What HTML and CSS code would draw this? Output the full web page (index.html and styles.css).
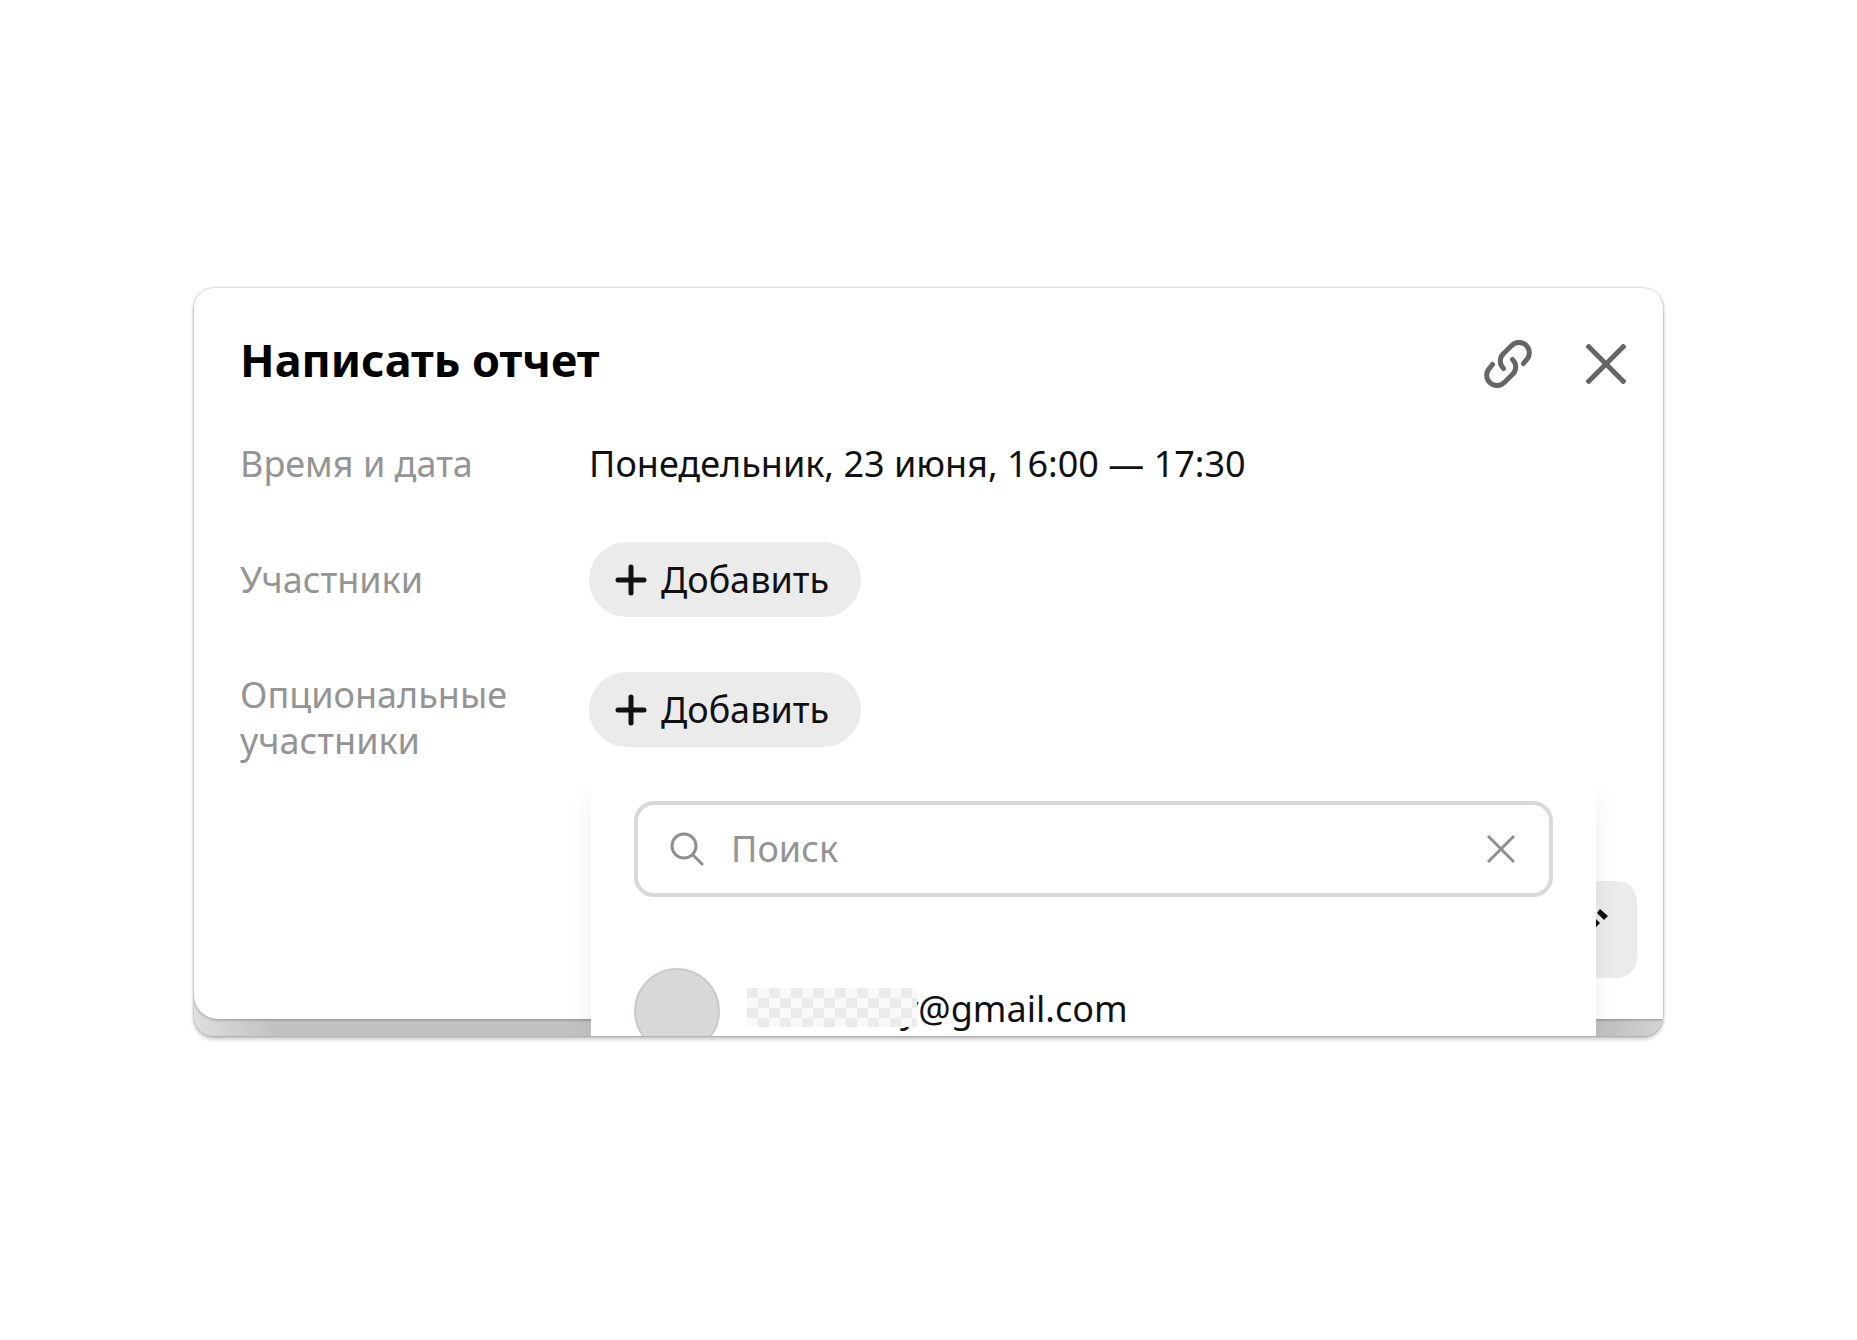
FILE: index.html
```html
<!DOCTYPE html>
<html lang="ru">
<head>
    <meta charset="UTF-8">
    <meta name="viewport" content="width=device-width, initial-scale=1.0">
    <title>Написать отчет</title>
    <link rel="stylesheet" href="styles.css">
</head>
<body>
    <main class="card">
        <div class="sheet">
            <header class="header">
                <h1 class="title">Написать отчет</h1>
                <button class="iconButton" type="button" aria-label="Скопировать ссылку">
                    <svg width="48" height="48" viewBox="0 0 48 48" fill="none" stroke="currentColor" stroke-width="5" stroke-linecap="round">
                        <path d="M39.5 23.5L42.3 20A10.3 10.3 0 0 0 27.7 5.4L19.7 13.4A10.3 10.3 0 0 0 19.5 28.5"/>
                        <path d="M8.5 24.5L5.7 28A10.3 10.3 0 0 0 20.3 42.6L28.3 34.6A10.3 10.3 0 0 0 28.5 19.5"/>
                    </svg>
                </button>
                <button class="iconButton" type="button" aria-label="Закрыть">
                    <svg width="40" height="40" viewBox="0 0 40 40" fill="none" stroke="currentColor" stroke-width="5">
                        <path d="M1 1L39 39M39 1L1 39"/>
                    </svg>
                </button>
            </header>
            <div class="fields">
                <div class="label">Время и дата</div>
                <div class="date">Понедельник, 23 июня, 16:00 — 17:30</div>
                <div class="label middle" id="members">Участники</div>
                <div>
                    <button class="addButton" type="button" aria-describedby="members">
                        <svg width="32" height="32" viewBox="0 0 32 32" stroke="currentColor" stroke-width="5" stroke-linecap="round">
                            <path d="M16 3V29M3 16H29"/>
                        </svg>
                        Добавить
                    </button>
                </div>
                <div class="label" id="optional">Опциональные участники</div>
                <div>
                    <button class="addButton" type="button" aria-describedby="optional">
                        <svg width="32" height="32" viewBox="0 0 32 32" stroke="currentColor" stroke-width="5" stroke-linecap="round">
                            <path d="M16 3V29M3 16H29"/>
                        </svg>
                        Добавить
                    </button>
                </div>
            </div>
            <footer class="footer">
                <button class="editButton" type="button" aria-label="Редактировать">
                    <svg width="42" height="42" viewBox="0 0 42 42" fill="currentColor">
                        <path d="M33 0L41 7L37 11L30 4ZM26 7L33 14L8 40L0 42L1 33Z"/>
                    </svg>
                </button>
            </footer>
        </div>

        <!-- Выпадающий список контактов -->
        <div class="popup">
            <div class="search">
                <svg width="34" height="34" viewBox="0 0 34 34" fill="none" stroke="currentColor" stroke-width="3" stroke-linecap="round">
                    <circle cx="14" cy="14" r="12"/>
                    <path d="M22.5 22.5L32 32"/>
                </svg>
                <input class="searchInput" type="text" placeholder="Поиск" aria-label="Поиск">
                <button class="clearButton" type="button" aria-label="Очистить">
                    <svg width="28" height="28" viewBox="0 0 28 28" fill="none" stroke="currentColor" stroke-width="3">
                        <path d="M1 1L27 27M27 1L1 27"/>
                    </svg>
                </button>
            </div>
            <div class="contact">
                <span class="avatar"></span>
                <span class="mosaic"></span>
                <span class="email">y@gmail.com</span>
            </div>
        </div>
    </main>
</body>
</html>
```
FILE: styles.css
```css
body {
    margin: 0;
    padding: 288px 194px;
    background-color: #fff;
    color: #111;
    font-family: "Noto Sans", sans-serif;
    font-size: 36px;
    line-height: 46px;
}
button {
    border: none;
    background: none;
    padding: 0;
    font: inherit;
    color: inherit;
    cursor: pointer;
}
svg {
    display: block;
    flex: none;
}
.card {
    position: relative;
    overflow: hidden;
    padding-bottom: 17px;
    border-radius: 20px;
    background: linear-gradient(to right, #dedede, #c2c2c2 80px, #c2c2c2 calc(100% - 50px), #d4d4d4);
    box-shadow: 0 0 2px rgba(0, 0, 0, 0.4), 0 3px 4px rgba(0, 0, 0, 0.25);
}
.sheet {
    padding: 44px 26px 41px 46px;
    border-radius: 0 0 0 24px;
    background: #fff;
    box-shadow: 0 1px 3px rgba(0, 0, 0, 0.3);
}
.header {
    display: flex;
    align-items: center;
    gap: 54px;
    height: 64px;
    margin-bottom: 45px;
    padding-right: 11px;
}
.title {
    flex: 1;
    align-self: flex-start;
    margin: 0;
    color: #000;
    font-size: 45px;
    line-height: 56px;
}
.iconButton {
    color: #666;
}
.fields {
    display: grid;
    grid-template-columns: 294px 1fr;
    gap: 55px;
}
.label {
    color: #949494;
}
.middle {
    align-self: center;
}
.addButton {
    display: flex;
    align-items: center;
    gap: 14px;
    height: 75px;
    padding: 0 32px 0 26px;
    border-radius: 38px;
    background: #ebebeb;
}
.footer {
    display: flex;
    justify-content: flex-end;
    margin-top: 117px;
}
.editButton {
    display: flex;
    align-items: center;
    justify-content: center;
    width: 98px;
    height: 97px;
    border-radius: 20px;
    background: #ebebeb;
}
.popup {
    position: absolute;
    top: 477px;
    left: 397px;
    right: 67px;
    padding: 36px 43px;
    background: #fff;
    box-shadow: 0 32px 24px rgba(0, 0, 0, 0.07);
}
.search {
    display: flex;
    align-items: center;
    gap: 27px;
    height: 88px;
    padding: 0 34px 0 32px;
    border: 4px solid #d9d9d9;
    border-radius: 20px;
    color: #8f8f8f;
}
.searchInput {
    flex: 1;
    min-width: 0;
    padding: 0;
    border: none;
    outline: none;
    background: none;
    font: inherit;
}
.searchInput::placeholder {
    color: #949494;
    opacity: 1;
}
.contact {
    display: flex;
    align-items: flex-start;
    margin-top: 71px;
}
.avatar {
    box-sizing: border-box;
    width: 86px;
    height: 86px;
    border: 2px solid #c8caca;
    border-radius: 50%;
    background: #d6d8d9;
}
.mosaic {
    z-index: 1;
    width: 170px;
    height: 39px;
    margin: 20px 0 0 27px;
    background: repeating-conic-gradient(#f9f9f9 0 25%, #ebebeb 0 50%) 0 0 / 22px 20px;
}
.email {
    margin: 18px 0 0 -17px;
}
```
